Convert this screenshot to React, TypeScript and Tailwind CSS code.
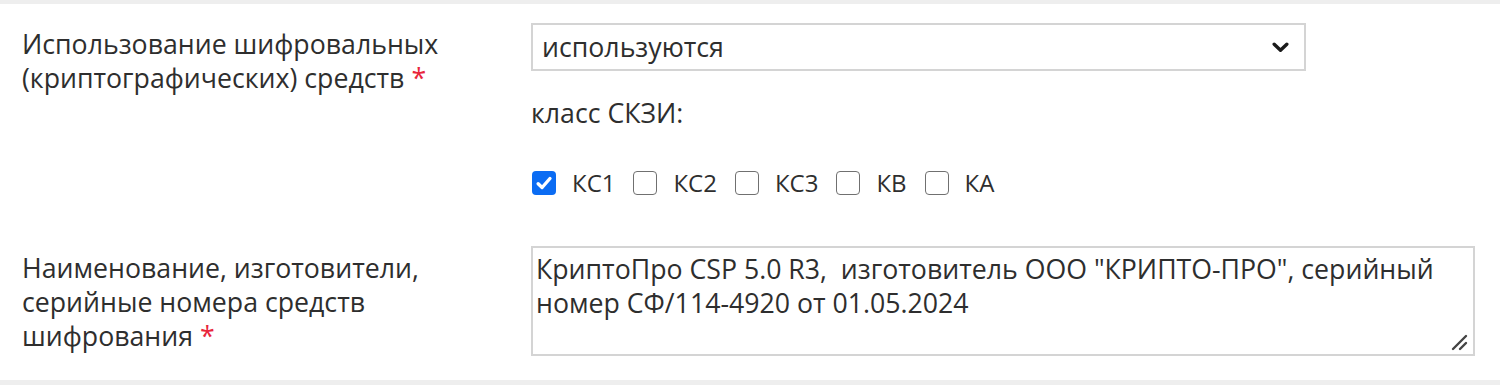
import React from "react";

const font = { fontFamily: '"Open Sans", "Noto Sans", "DejaVu Sans", sans-serif' };

function Check({ checked, label }: { checked?: boolean; label: string }) {
  return (
    <div className="flex items-center">
      {checked ? (
        <div className="w-[24px] h-[24px] rounded-[4px] bg-[#0b6cf3] flex items-center justify-center">
          <svg width="18" height="18" viewBox="0 0 16 16">
            <path d="M2.8 8.6 L6.3 12 L13.3 4" fill="none" stroke="#fff" strokeWidth="3" strokeLinecap="round" strokeLinejoin="round" />
          </svg>
        </div>
      ) : (
        <div className="w-[24px] h-[24px] rounded-[4px] border-[1.5px] border-[#707070] bg-white" />
      )}
      <span className="ml-[16px] mr-[18px] text-[24px]">{label}</span>
    </div>
  );
}

export default function App() {
  return (
    <div
      className="w-[1500px] h-[385px] bg-white border-t-[4px] border-b-[5px] border-[#eeeeee] text-[26.7px] leading-[34px] text-[#2e2e2e] overflow-hidden"
      style={font}
    >
      <div className="flex pl-[22px] pt-[19px]">
        <div className="w-[509px] pt-[4px] shrink-0">
          Использование шифровальных
          <br />
          (криптографических) средств <span className="text-[#e8263c]">*</span>
        </div>
        <div className="flex flex-col">
          <div className="w-[775px] h-[48px] border-2 border-[#d4d4d4] bg-white flex items-center justify-between pl-[9px] pr-[15px]">
            <span>используются</span>
            <svg width="17" height="11" viewBox="0 0 17 11">
              <path d="M2.2 2.2 L8.5 8.3 L14.8 2.2" fill="none" stroke="#1a1a1a" strokeWidth="3.4" strokeLinecap="round" strokeLinejoin="round" />
            </svg>
          </div>
          <div className="mt-[25px]">класс СКЗИ:</div>
          <div className="mt-[36px] flex items-center pl-[1px]">
            <Check checked label="КС1" />
            <Check label="КС2" />
            <Check label="КС3" />
            <Check label="КВ" />
            <Check label="КА" />
          </div>
        </div>
      </div>
      <div className="flex pl-[22px] pt-[46px]">
        <div className="w-[509px] pt-[5px] shrink-0">
          Наименование, изготовители,
          <br />
          серийные номера средств
          <br />
          шифрования <span className="text-[#e8263c]">*</span>
        </div>
        <div className="relative w-[944px] h-[110px] border-2 border-[#d4d4d4] bg-white pl-[3px] pt-[4px] whitespace-nowrap">
          КриптоПро CSP 5.0 R3,&nbsp; изготовитель ООО "КРИПТО-ПРО", серийный
          <br />
          номер СФ/114-4920 от 01.05.2024
          <svg className="absolute right-[4px] bottom-[3px]" width="18" height="18" viewBox="0 0 18 18">
            <path d="M2 16 L15 3" stroke="#444" strokeWidth="2.4" strokeLinecap="round" />
            <path d="M9 16 L15 10" stroke="#444" strokeWidth="2.4" strokeLinecap="round" />
          </svg>
        </div>
      </div>
    </div>
  );
}
